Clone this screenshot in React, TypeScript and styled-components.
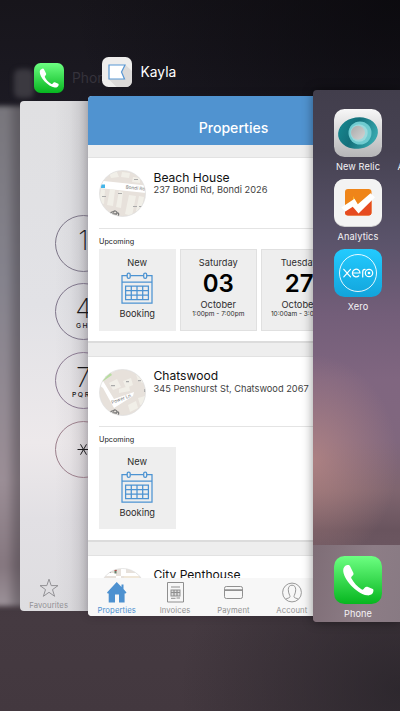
import React from "react";
import styled, { createGlobalStyle } from "styled-components";

const GlobalStyle = createGlobalStyle`
  * { box-sizing: border-box; }
  body { margin: 0; font-family: Inter, "Liberation Sans", sans-serif; }
  svg { display: block; flex: none; }
`;

const Screen = styled.main`
  position: relative;
  width: 400px;
  height: 711px;
  overflow: hidden;
  background:
    radial-gradient(ellipse 330px 250px at 400px 0, rgba(8, 7, 11, 0.75), transparent),
    radial-gradient(ellipse 220px 190px at 400px 690px, rgba(38, 34, 40, 0.75), transparent),
    linear-gradient(#17151b 0, #1c1a23 110px, #30292f 400px, #453a41 620px, #43383f 711px);
`;

/* One app in the switcher; windows overlap on a free canvas. */
const AppWindow = styled.section<{ $left: number; $top: number; $width: number; $blur?: number }>`
  position: absolute;
  left: ${(p) => p.$left}px;
  top: ${(p) => p.$top}px;
  width: ${(p) => p.$width}px;
  filter: ${(p) => (p.$blur ? `blur(${p.$blur}px)` : "none")};
`;

const AppCaption = styled.div<{ $inset: number; $gap: number; $dim?: boolean }>`
  display: flex;
  align-items: center;
  gap: 8.5px;
  height: 30px;
  padding-left: ${(p) => p.$inset}px;
  margin-bottom: ${(p) => p.$gap}px;
  font-size: 13.8px;
  color: ${(p) => (p.$dim ? "#35323b" : "#fff")};
`;

const BackgroundIcon = styled.div`
  width: 29px;
  height: 29px;
  border-radius: 6px;
  background: #3b3940;
`;

const BackgroundCard = styled.div`
  height: 500px;
  border-radius: 3px;
  background: linear-gradient(90deg, transparent 12px, rgba(45, 40, 46, 0.35) 24px),
    linear-gradient(#78767c, #85838d 35%, #9b8e96 75%, #85777f 92%, #9c9299);
`;

const DialCard = styled.div`
  display: flex;
  flex-direction: column;
  justify-content: space-between;
  height: 510px;
  padding-top: 113.5px;
  overflow: hidden;
  border-radius: 4px;
  background: linear-gradient(90deg, transparent 35px, rgba(70, 65, 75, 0.04) 50px, rgba(60, 55, 65, 0.2) 70px),
    linear-gradient(#e0e0e2, #e2e2e6 40%, #ede9eb 67%, #e2e0e4 82%, #dedde0);
`;

const Keypad = styled.div`
  display: flex;
  flex-direction: column;
  gap: 11.8px;
  padding-left: 35.5px;
`;

const Key = styled.div<{ $ring: string }>`
  display: flex;
  flex-direction: column;
  align-items: center;
  width: 57px;
  height: 57px;
  padding-top: 11px;
  border: 1px solid ${(p) => p.$ring};
  border-radius: 50%;
  color: #18171a;
`;

const KeyDigit = styled.span`
  font-size: 27px;
  line-height: 28px;
  font-weight: 200;
`;

const KeyLetters = styled.span`
  margin-top: -1.5px;
  padding-top: 0;
  font-size: 6.8px;
  line-height: 8px;
  font-weight: 500;
  letter-spacing: 1.6px;
  margin-right: -1.6px;
`;

const TabItem = styled.div<{ $color: string }>`
  display: flex;
  flex-direction: column;
  align-items: center;
  justify-content: flex-end;
  gap: 3px;
  width: 58.4px;
  font-size: 7.7px;
  line-height: 10px;
  letter-spacing: 0.1px;
  color: ${(p) => p.$color};
`;

const KaylaCard = styled.div`
  display: flex;
  flex-direction: column;
  height: 520px;
  overflow: hidden;
  border-radius: 4px;
  background: #eee;
  box-shadow: 0 0 9px rgba(30, 25, 35, 0.25);
`;

const NavBar = styled.header`
  display: flex;
  justify-content: center;
  flex: none;
  height: 49px;
  padding-top: 21.5px;
  font-size: 14.1px;
  line-height: 20px;
  font-weight: 500;
  color: #fff;
  background: #5093d0;
`;

const PropertyList = styled.div`
  display: flex;
  flex-direction: column;
  gap: 12.4px;
  flex: 1;
  min-height: 0;
  padding-top: 12px;
  overflow: hidden;
`;

const Property = styled.article`
  display: flex;
  flex-direction: column;
  flex: none;
  height: 186.4px;
  padding-left: 11.5px;
  border-top: 1px solid #e2e2e2;
  border-bottom: 2px solid #dcdcdc;
  background: #fff;
`;

const PropertyHead = styled.div`
  display: flex;
  gap: 7.5px;
  height: 70.5px;
  padding-top: 12px;
  border-bottom: 1px solid #e4e4e4;
`;

const PropertyName = styled.h2`
  margin: -0.5px 0 0;
  font-size: 12.1px;
  line-height: 15px;
  font-weight: 400;
  color: #111;
`;

const Address = styled.p`
  margin: -0.5px 0 0;
  font-size: 9.25px;
  line-height: 12px;
  color: #3f3f3f;
`;

const Upcoming = styled.div`
  margin: 8px 0 2px;
  font-size: 7.25px;
  line-height: 10px;
  color: #222;
`;

const Tiles = styled.div`
  display: flex;
  gap: 4.5px;
`;

const Tile = styled.div<{ $outlined?: boolean }>`
  display: flex;
  flex-direction: column;
  align-items: center;
  flex: none;
  width: 76.5px;
  height: 82px;
  padding-top: 7.5px;
  border: 1px solid ${(p) => (p.$outlined ? "#e0e0e0" : "#eee")};
  background: #eee;
  font-size: 9.25px;
  line-height: 12px;
  color: #2c2c2c;
`;

const DayNumber = styled.strong`
  font-size: 24px;
  line-height: 29.5px;
  font-weight: 600;
  color: #000;
`;

const TileTime = styled.small`
  margin-top: -0.5px;
  font-size: 6.5px;
  line-height: 8px;
  white-space: nowrap;
`;

const IconGap = styled.div`
  padding: 3px 0 4px;
`;

const TabBar = styled.nav`
  display: flex;
  flex: none;
  height: 38.5px;
  background: #f7f7f7;
`;

const HomeCard = styled.div`
  display: flex;
  flex-direction: column;
  justify-content: space-between;
  height: 532px;
  border-radius: 4px 0 0 4px;
  overflow: hidden;
  box-shadow: 0 0 11px rgba(0, 0, 0, 0.42);
  background:
    radial-gradient(ellipse 85px 105px at 0 370px, rgba(196, 143, 136, 0.65), transparent),
    linear-gradient(#423e4c 0, #464252 60px, #5a536a 150px, #735e79 225px, #806680 290px, #80677e 350px, #7f656f 400px, #69545e 440px, #6b5660 455px);
`;

const HomeGrid = styled.div`
  display: flex;
  flex-direction: column;
  gap: 4px;
  padding: 19px 0 0 15.5px;
`;

const HomeRow = styled.div`
  display: flex;
  align-items: flex-end;
`;

const HomeApp = styled.div`
  display: flex;
  flex-direction: column;
  align-items: center;
  flex: none;
  gap: 2px;
  width: 60px;
  font-size: 9.2px;
  line-height: 16px;
  letter-spacing: 0.12px;
  color: #f4f2f5;
  white-space: nowrap;
`;

const NextLabel = styled.span`
  margin-left: 9.5px;
  font-size: 9.2px;
  line-height: 16px;
  color: #f4f2f5;
`;

const Dock = styled.div`
  display: flex;
  height: 77px;
  padding: 11px 0 0 15.5px;
  background: linear-gradient(100deg, #7e6d76, #8d7d86 60%, #887a83);
`;

function PhoneIcon({ size, id }: { size: number; id: string }) {
  return (
    <svg width={size} height={size} viewBox="0 0 48 48">
      <defs>
        <linearGradient id={id} x2="0" y2="1">
          <stop stopColor="#6dff82" />
          <stop offset="1" stopColor="#06b61f" />
        </linearGradient>
      </defs>
      <rect width="48" height="48" rx="10.5" fill={`url(#${id})`} />
      <path
        fill="#fff"
        d="M13.300 9C11 9.500 9.300 11.400 9.200 13.900C8.900 22.800 22.500 37.600 33.100 39.300C35.700 39.700 38.600 38.500 39.200 36.100C39.500 34.600 39.700 33.600 38.800 33L33.400 30.800C32.300 30.500 31.500 30.800 30.900 31.500L29.600 33.100C29 33.800 28.200 33.800 27.400 33.300C23.300 30.800 19.700 26.700 17.500 22.600C17 21.700 17.200 20.900 18 20.200L18.900 19.300C19.600 18.600 19.700 17.700 19.300 16.800L16.100 10.200C15.500 8.900 14.400 8.700 13.300 9Z"
      />
    </svg>
  );
}

function KaylaIcon() {
  return (
    <svg width="30" height="30" viewBox="0 0 30 30">
      <rect width="30" height="30" rx="6.500" fill="#eeedec" />
      <path d="M23 7.500L30 14V24Q29.500 30 23.500 30H14.500L7 22.500Z" fill="#dcdad9" />
      <path d="M7 8H23L19.500 15L22.500 22H7Z" fill="#fff" stroke="#5997d3" strokeWidth="1.200" />
    </svg>
  );
}

function CalendarIcon() {
  return (
    <svg width="32" height="32" viewBox="0 0 32 32" fill="none" stroke="#4c93d2" strokeWidth="1.250">
      <path d="M6 3.500H1V31H31V3.500H26M9.500 3.500H22.500M1 10H31" />
      <rect x="6.200" y="1" width="3" height="5.400" rx="1.400" />
      <rect x="22.700" y="1" width="3" height="5.400" rx="1.400" />
      <path d="M4.600 14H27.400V27.500H4.600ZM4.600 18.500H27.400M4.600 23H27.400M10.300 14V27.500M16 14V27.500M21.700 14V27.500" />
    </svg>
  );
}

function MapAvatar({ kind }: { kind: "bondi" | "chatswood" | "city" }) {
  const clip = `map-${kind}`;
  return (
    <svg width="47" height="47" viewBox="0 0 47 47">
      <defs>
        <clipPath id={clip}>
          <circle cx="23.500" cy="23.500" r="23" />
        </clipPath>
      </defs>
      <g clipPath={`url(#${clip})`}>
        <rect width="47" height="47" fill="#e7e1db" />
        {kind === "bondi" && (
          <>
            <path d="M0 10.500L47 15.500V23L0 18Z" fill="#fff" />
            <g fill="#f1efe8">
              <path d="M10 3L17 0L20 7L12 8ZM23 2L31 3L30 8L22 7ZM34 7L41 8V13L33 12ZM2 19L6 20L5 34L0 33ZM11 19L16 20L14 36L8 35ZM20 21L24 22L22 38L17 37ZM30 25L37 26L33 46L26 44ZM40 26L45 27L42 42L37 41Z" />
            </g>
            <rect x="2" y="14.500" width="4" height="3.500" fill="#43b5e9" />
            <text x="26.500" y="18.500" fontSize="4.700" fill="#777" transform="rotate(6 26 18)">Bondi Rd</text>
            <g fill="#aaa"><path d="M19 23h4v1h-4zM3 26h4v1H3zM34 36h4v1h-4zM40 36h4v1h-4zM35 9h4v1h-4z" /></g>
          </>
        )}
        {kind === "chatswood" && (
          <>
            <path d="M2 13L13 0L0 0ZM3 13L13 6L10 2Z" fill="#b8dda0" />
            <path d="M0 16L4 19L15 39L34 27L35 23L15 30L4 12ZM15 0L12 4L20 0Z" fill="#fff" />
            <g fill="#f1efe8">
              <path d="M10 14L18 10L22 18L14 21ZM24 12L32 9L34 16L27 19ZM20 20L30 17L31 22L20 24ZM37 5L44 4V14L39 12ZM29 36L37 32L39 39L31 43ZM39 29L46 27V35L41 36Z" />
            </g>
            <text x="13" y="35" fontSize="4.700" fill="#777" transform="rotate(-20 13 35)">Power Ln</text>
            <g fill="#aaa"><path d="M12 16h4v1.200h-4zM27 12h3v1.200h-3zM39 11h3v1.200h-3zM45 20h2v3h-2z" /></g>
          </>
        )}
        {kind === "city" && (
          <>
            <path d="M0 8H47V5H27V0H17V5H0ZM17 0H22V20H17Z" fill="#fff" />
            <path d="M25 8H40V14H25Z" fill="#f0e7d8" />
            <path d="M15.500 1.500h2v4h-2z" fill="#66806b" />
            <path d="M15.500 1.500h2v1.500h-2z" fill="#b33" />
            <path d="M9 4h3v1h-3z" fill="#999" />
          </>
        )}
        {kind !== "city" && (
          <path
            d="M11 44C12 41 14 42 14.500 42C15 40 18 41 18 43C20 42.500 20 45 19 46M13 44H18"
            fill="none"
            stroke="#777"
            strokeWidth="1.300"
          />
        )}
      </g>
      <circle cx="23.500" cy="23.500" r="23" fill="none" stroke="#dedede" strokeWidth="0.700" />
    </svg>
  );
}

function StarIcon() {
  return (
    <svg width="20" height="20" viewBox="0 0 20 20" fill="none" stroke="#929195">
      <path d="M10 1.200L12.200 7.600H19L13.500 11.600L15.600 18.300L10 14.300L4.400 18.300L6.500 11.600L1 7.600H7.800Z" />
    </svg>
  );
}

function HouseIcon() {
  return (
    <svg width="20" height="21" viewBox="0 0 20 21">
      <path fill="#4d91d0" d="M9.700 0L14.500 5V2.500H16.500V7L19.500 10.500L18.500 11.500H17.600V20.500H12V12.500H8V20.500H1.700V11.500H.7L0 10.600Z" />
    </svg>
  );
}

function InvoiceIcon() {
  return (
    <svg width="17" height="21" viewBox="0 0 17 21" fill="none" stroke="#8f8f8f">
      <path d="M.5 .5H16.500V20H.5ZM4 5H13M4 16.300H8.500" />
      <rect x="4" y="8" width="9" height="6" fill="#ddd" />
      <path d="M4 10.500H13M7 8V14M10 8V14M9.500 16H13" strokeWidth="1.200" />
    </svg>
  );
}

function CardIcon() {
  return (
    <svg width="19" height="20" viewBox="0 0 19 20" fill="none" stroke="#909090">
      <rect x=".5" y="3.500" width="18" height="12" rx="1.800" />
      <path d="M.5 7.200H18.500" strokeWidth="1.800" />
    </svg>
  );
}

function AccountIcon() {
  return (
    <svg width="20" height="21" viewBox="0 0 20 21" fill="none" stroke="#8d8d8d" strokeWidth=".9">
      <circle cx="10" cy="10.500" r="9.400" />
      <path d="M3.700 17.200C5.300 16 8 16.300 8 14.500C8 13.300 6.300 11.300 6.300 7.700C6.300 5 7.500 3.200 10 3.200S13.700 5 13.700 7.700C13.700 11.300 12 13.300 12 14.500C12 16.300 14.700 16 16.300 17.200" />
    </svg>
  );
}

function NewRelicIcon() {
  return (
    <svg width="48" height="48" viewBox="0 0 48 48">
      <defs>
        <linearGradient id="relic-plate" x2="0" y2="1">
          <stop stopColor="#f7f7f7" />
          <stop offset="1" stopColor="#b5b5b7" />
        </linearGradient>
        <linearGradient id="relic-eye" x2="1" y2=".5">
          <stop stopColor="#168c94" />
          <stop offset=".5" stopColor="#146f7a" />
          <stop offset="1" stopColor="#35a5ac" />
        </linearGradient>
        <linearGradient id="relic-core" x2="1" y2="1">
          <stop stopColor="#aaa" />
          <stop offset="1" stopColor="#d4d4d4" />
        </linearGradient>
      </defs>
      <rect width="48" height="48" rx="10.500" fill="url(#relic-plate)" />
      <ellipse cx="24" cy="24" rx="20" ry="15.700" transform="rotate(-9 24 24)" fill="url(#relic-eye)" />
      <circle cx="26" cy="24" r="11.500" fill="#70cbd0" />
      <circle cx="25" cy="24" r="8.700" fill="#9ad9dc" />
      <circle cx="24" cy="23.700" r="7" fill="url(#relic-core)" />
    </svg>
  );
}

function AnalyticsIcon() {
  return (
    <svg width="48" height="48" viewBox="0 0 48 48">
      <rect width="48" height="48" rx="10.500" fill="#cfcfcf" />
      <rect width="48" height="47" rx="10.500" fill="#f3f3f3" />
      <rect x="11" y="10" width="26.500" height="26.500" rx="3" fill="#ef8519" />
      <path d="M11 29L19 22L25 29L37.500 19V33.500Q37.500 36.500 34.500 36.500H14Q11 36.500 11 33.500Z" fill="#e64b20" />
      <path d="M19 17V29L23 25Z" fill="#ffbd2e" />
      <path d="M7.300 28.500L20.500 19.800L23.800 25.300L36.500 14.300L41 18.300L24.500 34.500L18.800 27.800L11.300 32.500Z" fill="#fff" />
    </svg>
  );
}

function XeroIcon() {
  return (
    <svg width="48" height="48" viewBox="0 0 48 48">
      <defs>
        <linearGradient id="xero-plate" x2="0" y2="1">
          <stop stopColor="#23cbff" />
          <stop offset="1" stopColor="#12a4db" />
        </linearGradient>
      </defs>
      <rect width="48" height="48" rx="10.500" fill="url(#xero-plate)" />
      <g fill="none" stroke="#fff">
        <circle cx="24" cy="24" r="18.500" strokeWidth=".9" />
        <g strokeWidth="1.200" strokeLinecap="round">
          <path d="M9.800 20.300L16.500 27.800M16.500 20.300L9.800 27.800M18.500 24H26A3.800 3.800 0 1 0 24.800 26.800M28.700 28V23Q28.700 20.400 31 20.400" />
          <circle cx="35" cy="24" r="3.700" />
        </g>
      </g>
      <circle cx="35" cy="24" r="1.300" fill="#fff" />
    </svg>
  );
}

function AsteriskKey() {
  return (
    <svg width="13" height="13" viewBox="0 0 13 13" stroke="#1b1a1d" strokeWidth="1">
      <path d="M.5 6.500H12.500M3.500 1.300L9.500 11.700M9.500 1.300L3.500 11.700" />
    </svg>
  );
}

const StarKey = styled(Key)`
  justify-content: center;
  padding: 0;
`;

function NewBookingTile() {
  return (
    <Tile>
      New
      <IconGap>
        <CalendarIcon />
      </IconGap>
      Booking
    </Tile>
  );
}

function BookingTile(p: { day: string; date: string; month: string; time: string }) {
  return (
    <Tile $outlined>
      <span>{p.day}</span>
      <DayNumber>{p.date}</DayNumber>
      <span>{p.month}</span>
      <TileTime>{p.time}</TileTime>
    </Tile>
  );
}

function PropertyPanel(p: {
  map: "bondi" | "chatswood" | "city";
  name: string;
  address?: string;
  children?: React.ReactNode;
}) {
  return (
    <Property>
      <PropertyHead>
        <MapAvatar kind={p.map} />
        <div>
          <PropertyName>{p.name}</PropertyName>
          {p.address && <Address>{p.address}</Address>}
        </div>
      </PropertyHead>
      {p.children && (
        <>
          <Upcoming>Upcoming</Upcoming>
          <Tiles>{p.children}</Tiles>
        </>
      )}
    </Property>
  );
}

export default function App() {
  return (
    <Screen>
      <GlobalStyle />
      <AppWindow $left={-6} $top={68} $width={40} $blur={2.5}>
        <AppCaption $inset={20} $gap={8}>
          <BackgroundIcon />
        </AppCaption>
        <BackgroundCard />
      </AppWindow>

      <AppWindow $left={19.5} $top={63} $width={290}>
        <AppCaption $inset={14} $gap={8} $dim>
          <PhoneIcon size={30} id="phone-small" />
          Phone
        </AppCaption>
        <DialCard>
          <Keypad>
            <Key $ring="#7c7587">
              <KeyDigit>1</KeyDigit>
            </Key>
            <Key $ring="#7f758a">
              <KeyDigit>4</KeyDigit>
              <KeyLetters>GHI</KeyLetters>
            </Key>
            <Key $ring="#8b7a91">
              <KeyDigit>7</KeyDigit>
              <KeyLetters>PQRS</KeyLetters>
            </Key>
            <StarKey $ring="#9b7f8b">
              <AsteriskKey />
            </StarKey>
          </Keypad>
          <TabItem $color="#929195">
            <StarIcon />
            Favourites
          </TabItem>
        </DialCard>
      </AppWindow>

      <AppWindow $left={87.5} $top={57} $width={292}>
        <AppCaption $inset={14.5} $gap={9}>
          <KaylaIcon />
          Kayla
        </AppCaption>
        <KaylaCard>
          <NavBar>Properties</NavBar>
          <PropertyList>
            <PropertyPanel map="bondi" name="Beach House" address="237 Bondi Rd, Bondi 2026">
              <NewBookingTile />
              <BookingTile day="Saturday" date="03" month="October" time="1:00pm - 7:00pm" />
              <BookingTile day="Tuesday" date="27" month="October" time="10:00am - 3:00pm" />
            </PropertyPanel>
            <PropertyPanel map="chatswood" name="Chatswood" address="345 Penshurst St, Chatswood 2067">
              <NewBookingTile />
            </PropertyPanel>
            <PropertyPanel map="city" name="City Penthouse" />
          </PropertyList>
          <TabBar>
            <TabItem $color="#4d91d0">
              <HouseIcon />
              Properties
            </TabItem>
            <TabItem $color="#929292">
              <InvoiceIcon />
              Invoices
            </TabItem>
            <TabItem $color="#929292">
              <CardIcon />
              Payment
            </TabItem>
            <TabItem $color="#929292">
              <AccountIcon />
              Account
            </TabItem>
          </TabBar>
        </KaylaCard>
      </AppWindow>

      <AppWindow $left={312.5} $top={90} $width={88}>
        <HomeCard>
          <HomeGrid>
            <HomeRow>
              <HomeApp>
                <NewRelicIcon />
                New Relic
              </HomeApp>
              <NextLabel>A</NextLabel>
            </HomeRow>
            <HomeApp>
              <AnalyticsIcon />
              Analytics
            </HomeApp>
            <HomeApp>
              <XeroIcon />
              Xero
            </HomeApp>
          </HomeGrid>
          <Dock>
            <HomeApp>
              <PhoneIcon size={48} id="phone-large" />
              Phone
            </HomeApp>
          </Dock>
        </HomeCard>
      </AppWindow>
    </Screen>
  );
}
